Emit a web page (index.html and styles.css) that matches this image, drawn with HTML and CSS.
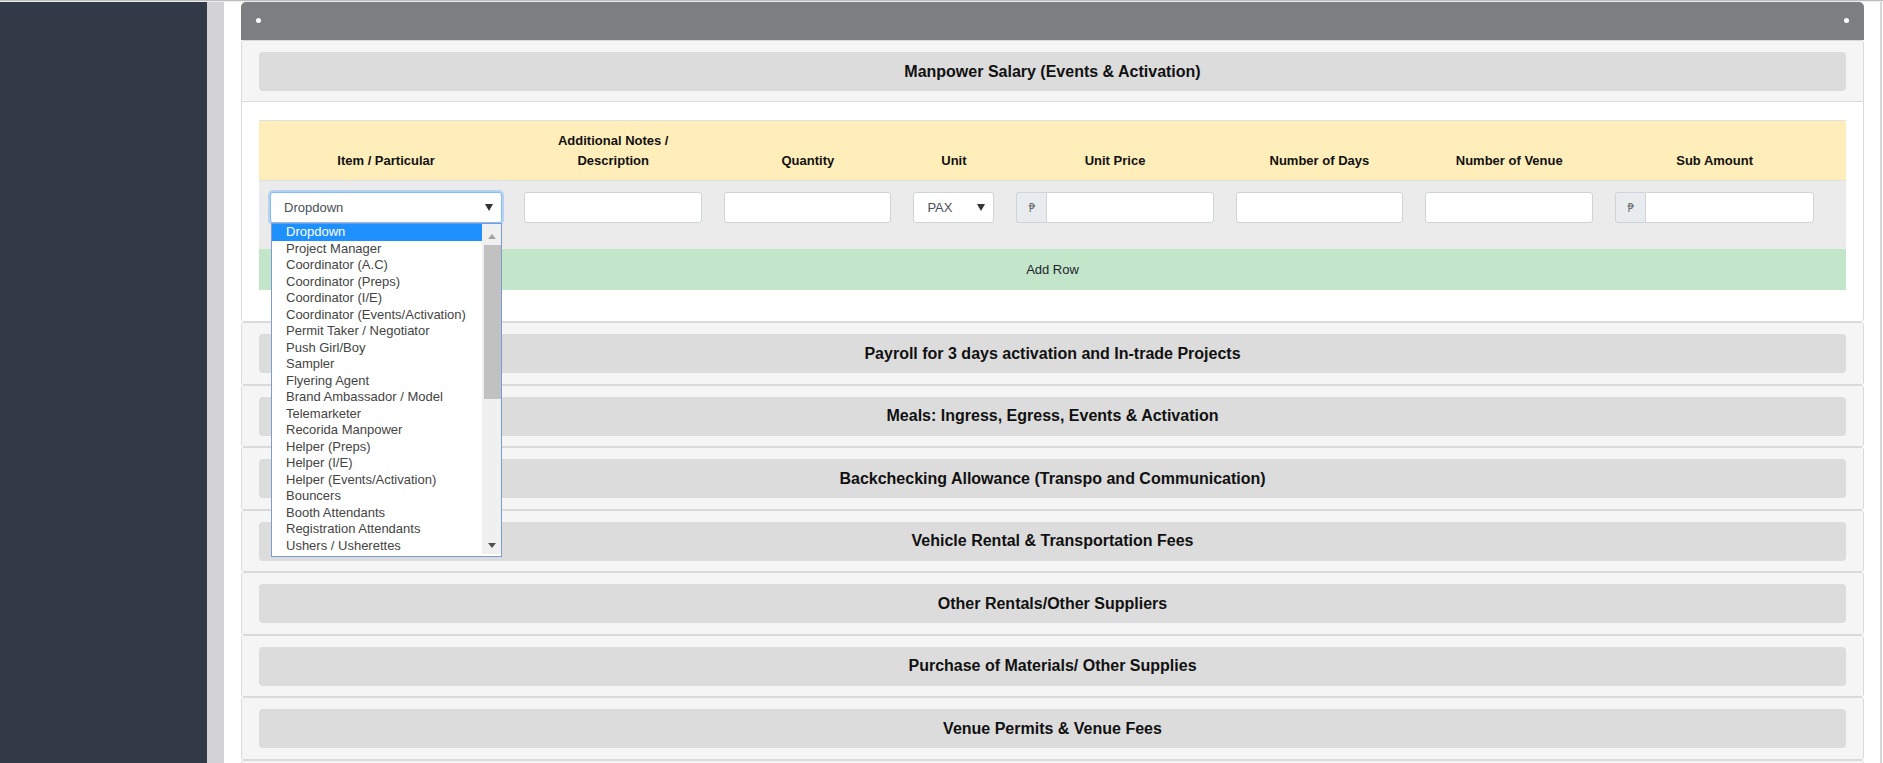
FILE: index.html
```html
<!DOCTYPE html>
<html lang="en">
<head>
<meta charset="utf-8">
<title>Budget Items</title>
<link rel="stylesheet" href="styles.css">
</head>
<body>
<div class="topline"></div>
<div class="app">
  <aside class="sidebar"></aside>
  <div class="gutter"></div>
  <main class="main">
    <div class="panel">
      <div class="panel-head"><span class="dot"></span><span class="dot"></span></div>

      <section class="sec open">
        <div class="sec-head"><button class="sec-btn">Manpower Salary (Events &amp; Activation)</button></div>
        <div class="sec-body">
          <table class="items">
            <colgroup>
              <col class="c-item"><col class="c-notes"><col class="c-qty"><col class="c-unit"><col class="c-price"><col class="c-days"><col class="c-venue"><col class="c-sub"><col class="c-act">
            </colgroup>
            <thead>
              <tr>
                <th>Item / Particular</th>
                <th>Additional Notes / Description</th>
                <th>Quantity</th>
                <th>Unit</th>
                <th>Unit Price</th>
                <th>Number of Days</th>
                <th>Number of Venue</th>
                <th>Sub Amount</th>
                <th></th>
              </tr>
            </thead>
            <tbody>
              <tr class="row">
                <td class="cell-item">
                  <div class="ctl sel focus"><span>Dropdown</span><span class="caret"></span></div>
                  <div class="listbox">
                    <div class="opts">
                      <div class="opt on">Dropdown</div>
                      <div class="opt">Project Manager</div>
                      <div class="opt">Coordinator (A.C)</div>
                      <div class="opt">Coordinator (Preps)</div>
                      <div class="opt">Coordinator (I/E)</div>
                      <div class="opt">Coordinator (Events/Activation)</div>
                      <div class="opt">Permit Taker / Negotiator</div>
                      <div class="opt">Push Girl/Boy</div>
                      <div class="opt">Sampler</div>
                      <div class="opt">Flyering Agent</div>
                      <div class="opt">Brand Ambassador / Model</div>
                      <div class="opt">Telemarketer</div>
                      <div class="opt">Recorida Manpower</div>
                      <div class="opt">Helper (Preps)</div>
                      <div class="opt">Helper (I/E)</div>
                      <div class="opt">Helper (Events/Activation)</div>
                      <div class="opt">Bouncers</div>
                      <div class="opt">Booth Attendants</div>
                      <div class="opt">Registration Attendants</div>
                      <div class="opt">Ushers / Usherettes</div>
                    </div>
                    <div class="sbar">
                      <div class="sb-up"><span class="tri-up"></span></div>
                      <div class="sb-thumb"></div>
                      <div class="sb-fill"></div>
                      <div class="sb-down"><span class="tri-down"></span></div>
                    </div>
                  </div>
                </td>
                <td><div class="ctl"></div></td>
                <td><div class="ctl"></div></td>
                <td><div class="ctl sel"><span>PAX</span><span class="caret"></span></div></td>
                <td><div class="grp"><span class="pre">&#8369;</span><div class="ctl"></div></div></td>
                <td><div class="ctl"></div></td>
                <td><div class="ctl"></div></td>
                <td><div class="grp"><span class="pre">&#8369;</span><div class="ctl"></div></div></td>
                <td></td>
              </tr>
              <tr class="addrow">
                <td colspan="9">Add Row</td>
              </tr>
            </tbody>
          </table>
        </div>
      </section>

      <section class="sec"><div class="sec-head"><button class="sec-btn">Payroll for 3 days activation and In-trade Projects</button></div></section>
      <section class="sec"><div class="sec-head"><button class="sec-btn">Meals: Ingress, Egress, Events &amp; Activation</button></div></section>
      <section class="sec"><div class="sec-head"><button class="sec-btn">Backchecking Allowance (Transpo and Communication)</button></div></section>
      <section class="sec"><div class="sec-head"><button class="sec-btn">Vehicle Rental &amp; Transportation Fees</button></div></section>
      <section class="sec"><div class="sec-head"><button class="sec-btn">Other Rentals/Other Suppliers</button></div></section>
      <section class="sec"><div class="sec-head"><button class="sec-btn">Purchase of Materials/ Other Supplies</button></div></section>
      <section class="sec"><div class="sec-head"><button class="sec-btn">Venue Permits &amp; Venue Fees</button></div></section>
      <section class="sec"><div class="sec-head"><button class="sec-btn"></button></div></section>
    </div>
  </main>
  <div class="edge"></div>
</div>
</body>
</html>
```

FILE: styles.css
```css
html, body {
  margin: 0;
  padding: 0;
}

body {
  font-family: "Liberation Sans", Arial, sans-serif;
  background: #ffffff;
  height: 763px;
  overflow: hidden;
  color: #212529;
}

.topline {
  height: 2px;
  background: linear-gradient(#bdbdbd 0 1px, #ededed 1px 2px);
}

.app {
  display: flex;
  height: 761px;
}

.sidebar {
  flex: none;
  width: 207px;
  background: #333a47;
}

.gutter {
  flex: none;
  width: 17px;
  background: #d3d3d5;
}

.main {
  flex: 1;
  min-width: 0;
  padding: 0 16px 0 17px;
  overflow: hidden;
}

.edge {
  flex: none;
  width: 3px;
  box-sizing: border-box;
  border-left: 2px solid #d6d6d6;
}

/* panel */
.panel-head {
  height: 38px;
  background: #7c7f82;
  border-radius: 5px 5px 0 0;
  display: flex;
  justify-content: space-between;
  align-items: center;
  padding: 0 15px 2px;
  box-sizing: border-box;
}

.dot {
  width: 5px;
  height: 5px;
  border-radius: 50%;
  background: #ffffff;
}

/* accordion sections */
.sec {
  border: 1px solid #dadada;
  border-radius: 3px;
}

.sec-head {
  background: #f5f5f5;
  padding: 11px 17px 10.5px;
  border-radius: 2px;
}

.sec.open .sec-head {
  padding-bottom: 10px;
  border-bottom: 1px solid #dadada;
  border-radius: 2px 2px 0 0;
}

.sec-btn {
  display: block;
  width: 100%;
  height: 39px;
  margin: 0;
  padding: 0;
  border: 0;
  border-radius: 4px;
  background: #dcdcdc;
  font-family: "Liberation Sans", Arial, sans-serif;
  font-weight: bold;
  font-size: 16px;
  color: #111111;
  text-align: center;
}

.sec-body {
  background: #ffffff;
  padding: 18px 17px;
  border-radius: 0 0 2px 2px;
}

/* table */
.items {
  width: 100%;
  border-collapse: collapse;
  table-layout: fixed;
  margin-bottom: 13px;
  font-size: 13px;
  color: #212529;
}

.c-item { width: 254px; }
.c-notes { width: 200px; }
.c-qty { width: 189px; }
.c-unit { width: 103px; }
.c-price { width: 219px; }
.c-days { width: 189.5px; }
.c-venue { width: 190px; }
.c-sub { width: 220.5px; }
.c-act { width: 21px; }

.items th {
  background: #ffeeba;
  border-top: 1px solid #dfe2e5;
  border-bottom: 1px solid #dfe2e5;
  padding: 10px 11px 9px;
  line-height: 20px;
  vertical-align: bottom;
  font-weight: bold;
  text-align: center;
  color: #111111;
}

.row td {
  background: #ebebeb;
  padding: 11px 11px 26px;
  vertical-align: top;
}

.cell-item {
  position: relative;
}

.addrow td {
  background: #c3e6cb;
  text-align: center;
  padding: 12px;
  line-height: 17px;
  color: #212529;
}

/* controls */
.ctl {
  box-sizing: border-box;
  height: 31px;
  width: 100%;
  background: #ffffff;
  border: 1px solid #ced4da;
  border-radius: 3px;
}

.sel {
  display: flex;
  align-items: center;
  justify-content: space-between;
  padding: 0 8px 0 13px;
  color: #495057;
  font-size: 13px;
}

.sel.focus {
  border-color: #80bdff;
  box-shadow: 0 0 0 2px rgba(0, 123, 255, 0.22);
}

.caret {
  width: 0;
  height: 0;
  border-left: 4px solid transparent;
  border-right: 4px solid transparent;
  border-top: 7px solid #333333;
}

.grp {
  display: flex;
}

.pre {
  flex: none;
  box-sizing: border-box;
  width: 30px;
  height: 31px;
  display: flex;
  align-items: center;
  justify-content: center;
  background: #e9ecef;
  border: 1px solid #ced4da;
  border-right: 0;
  border-radius: 3px 0 0 3px;
  font-family: "Noto Sans", "DejaVu Sans", sans-serif;
  font-size: 12px;
  color: #666a6e;
}

.grp .ctl {
  flex: 1;
  min-width: 0;
  border-radius: 0 3px 3px 0;
}

/* open dropdown list */
.listbox {
  position: absolute;
  left: 12px;
  top: 42px;
  width: 231px;
  height: 334px;
  box-sizing: border-box;
  display: flex;
  background: #ffffff;
  border: 1px solid #7b9bd1;
  padding-bottom: 2px;
  z-index: 5;
}

.opts {
  flex: 1;
  min-width: 0;
  overflow: hidden;
}

.opt {
  height: 16.5px;
  line-height: 16.5px;
  padding-left: 14px;
  font-size: 13px;
  color: #444444;
  white-space: nowrap;
}

.opt.on {
  background: #1e90ff;
  color: #ffffff;
}

.sbar {
  flex: none;
  width: 19px;
  background: #f0f0f0;
  display: flex;
  flex-direction: column;
}

.sb-up,
.sb-down {
  flex: none;
  display: flex;
  align-items: center;
  justify-content: center;
}

.sb-up {
  height: 21px;
  padding-top: 3px;
  box-sizing: border-box;
}

.sb-down {
  height: 18px;
}

.sb-thumb {
  flex: none;
  height: 154px;
  margin: 0 0 0 2px;
  background: #c1c1c1;
}

.sb-fill {
  flex: 1;
}

.tri-up {
  width: 0;
  height: 0;
  border-left: 4px solid transparent;
  border-right: 4px solid transparent;
  border-bottom: 5px solid #a3a3a3;
}

.tri-down {
  width: 0;
  height: 0;
  border-left: 4px solid transparent;
  border-right: 4px solid transparent;
  border-top: 5px solid #505050;
}
```
